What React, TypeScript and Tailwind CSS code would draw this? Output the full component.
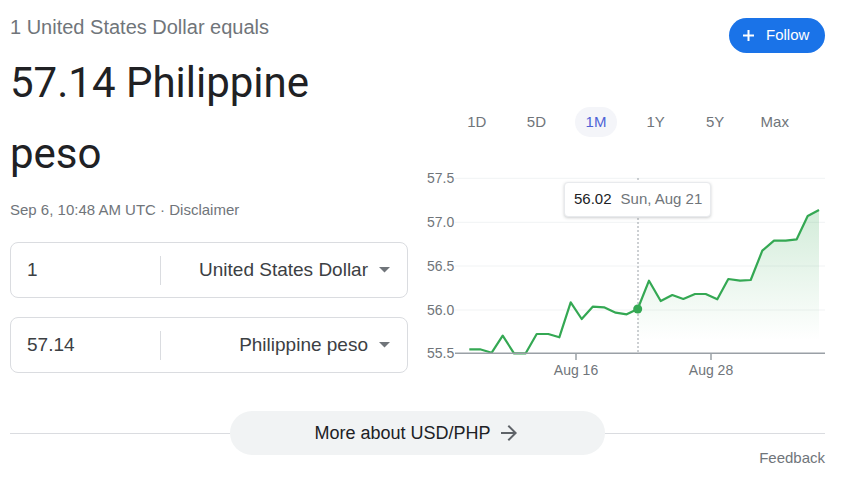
const tabs = ["1D", "5D", "1M", "1Y", "5Y", "Max"];

const pts: [number, number][] = [
  [49.3, 184.3], [60, 184.3], [71.7, 187.7], [82.7, 170.7], [94, 188.3], [105.7, 188.3],
  [116.7, 169], [128.3, 169], [139.3, 172.3], [150.7, 137.3], [161.7, 154], [172.7, 141.7],
  [184, 142.3], [195.7, 147.7], [206.7, 149.3], [217.7, 144], [229, 115.7], [240.7, 136],
  [252.3, 130], [263.3, 134], [275, 129], [285.7, 129], [297.3, 134.3], [308.3, 114],
  [320, 115.7], [330.7, 115], [342.3, 85.7], [354, 75.7], [365.7, 75.7], [376.7, 74.3],
  [387.7, 51], [399, 45],
];

const grid = [
  { y: 13.3, label: "57.5" },
  { y: 57.3, label: "57.0" },
  { y: 101, label: "56.5" },
  { y: 145, label: "56.0" },
];

function Caret() {
  return (
    <svg width="11" height="6" viewBox="0 0 11 6">
      <path d="M0 0h11L5.5 5.5z" fill="#70757a" />
    </svg>
  );
}

function CurrencyBox({ amount, currency }: { amount: string; currency: string }) {
  return (
    <div className="flex h-[56px] items-center rounded-lg border border-[#dadce0]">
      <div className="w-[149px] pl-[16px] text-[19px] text-[#3c4043]">{amount}</div>
      <div className="h-[29px] w-px bg-[#dadce0]" />
      <div className="flex flex-1 items-center justify-end gap-[11px] pr-[17px] text-[19px] text-[#3c4043]">
        <span>{currency}</span>
        <Caret />
      </div>
    </div>
  );
}

function Chart() {
  const line = pts.map((p, i) => `${i ? "L" : "M"}${p[0]} ${p[1]}`).join(" ");
  const tail = pts.slice(15);
  const area =
    tail.map((p, i) => `${i ? "L" : "M"}${p[0]} ${p[1]}`).join(" ") +
    ` L399 188.3 L217.7 188.3 Z`;

  return (
    <div className="relative mt-[28px] h-[215px] w-[405px]">
      <svg width="405" height="215" viewBox="0 0 405 215" className="overflow-visible">
        <defs>
          <linearGradient id="fill" x1="0" y1="45" x2="0" y2="175" gradientUnits="userSpaceOnUse">
            <stop offset="0" stopColor="#34a853" stopOpacity="0.22" />
            <stop offset="1" stopColor="#34a853" stopOpacity="0" />
          </linearGradient>
        </defs>
        {grid.map((g) => (
          <g key={g.label}>
            <line x1="35" x2="405" y1={g.y} y2={g.y} stroke="#f1f3f4" strokeWidth="1" />
            <text x="7" y={g.y + 5} fontSize="14" fill="#70757a" fontFamily="Liberation Sans, Arial, sans-serif">
              {g.label}
            </text>
          </g>
        ))}
        <text x="7" y={193.3} fontSize="14" fill="#70757a" fontFamily="Liberation Sans, Arial, sans-serif">
          55.5
        </text>
        <path d={area} fill="url(#fill)" />
        <line x1="218" x2="218" y1="13" y2="188" stroke="#9aa0a6" strokeWidth="1" strokeDasharray="2 2" />
        <path d={line} fill="none" stroke="#34a853" strokeWidth="2.2" strokeLinejoin="round" />
        <line x1="35" x2="405" y1="188.3" y2="188.3" stroke="#9aa0a6" strokeWidth="1.5" />
        <line x1="156" x2="156" y1="188" y2="195" stroke="#9aa0a6" strokeWidth="1.5" />
        <line x1="291" x2="291" y1="188" y2="195" stroke="#9aa0a6" strokeWidth="1.5" />
        <text x="156" y="210" textAnchor="middle" fontSize="14" fill="#70757a" fontFamily="Liberation Sans, Arial, sans-serif">
          Aug 16
        </text>
        <text x="291" y="210" textAnchor="middle" fontSize="14" fill="#70757a" fontFamily="Liberation Sans, Arial, sans-serif">
          Aug 28
        </text>
        <circle cx="217.7" cy="144" r="4.5" fill="#34a853" />
      </svg>
      <div className="absolute left-[144px] top-[17px] flex h-[35px] w-[147px] items-center gap-[9px] rounded border border-[#e8eaed] bg-white pl-[9px] text-[15px] shadow-[0_1px_3px_rgba(60,64,67,0.25)]">
        <span className="text-[#202124]">56.02</span>
        <span className="text-[#70757a]">Sun, Aug 21</span>
      </div>
    </div>
  );
}

export default function App() {
  return (
    <div className="h-[478px] w-[843px] overflow-hidden bg-white pl-[10px] pr-[18px] font-['Liberation_Sans',Arial,sans-serif]">
      <div className="flex h-[380px] items-start">
        <div className="w-[398px]">
          <p className="pt-[15px] text-[20px] leading-[24px] text-[#70757a]">1 United States Dollar equals</p>
          <p className="mt-[8px] font-['Roboto',Arial,sans-serif] text-[42px] leading-[71px] text-[#202124]">
            57.14 Philippine
            <br />
            peso
          </p>
          <p className="mt-[11px] text-[15px] leading-[20px] text-[#70757a]">
            Sep 6, 10:48 AM UTC · <span>Disclaimer</span>
          </p>
          <div className="mt-[22px] flex flex-col gap-[19px]">
            <CurrencyBox amount="1" currency="United States Dollar" />
            <CurrencyBox amount="57.14" currency="Philippine peso" />
          </div>
        </div>

        <div className="ml-[12px] flex flex-1 flex-col">
          <button className="mt-[18px] flex h-[35px] w-[96px] items-center gap-[12px] self-end rounded-full bg-[#1a73e8] pl-[14px] text-[15px] text-white">
            <svg width="11" height="11" viewBox="0 0 11 11">
              <path d="M5.5 0v11M0 5.5h11" stroke="white" strokeWidth="2" />
            </svg>
            Follow
          </button>
          <div className="mt-[54px] flex pl-[27px]">
            {tabs.map((t) => (
              <div key={t} className="flex w-[59.6px] justify-center">
                <span
                  className={
                    t === "1M"
                      ? "flex h-[30px] items-center rounded-full bg-[#f4f5f9] px-[11px] text-[15px] text-[#4e63d6]"
                      : "flex h-[30px] items-center px-[11px] text-[15px] text-[#70757a]"
                  }
                >
                  {t}
                </span>
              </div>
            ))}
          </div>
          <Chart />
        </div>
      </div>

      <div className="mt-[31px] flex items-center">
        <div className="h-px flex-1 bg-[#dadce0]" />
        <button className="flex h-[44px] w-[375px] items-center justify-center gap-[6px] rounded-full bg-[#f1f3f4] text-[18px] text-[#202124]">
          More about USD/PHP
          <svg width="24" height="24" viewBox="0 0 24 24">
            <path d="M12 4l-1.41 1.41L16.17 11H4v2h12.17l-5.58 5.59L12 20l8-8z" fill="#5f6368" />
          </svg>
        </button>
        <div className="h-px flex-1 bg-[#dadce0]" />
      </div>
      <p className="-mt-[5px] text-right text-[15px] leading-[15px] text-[#70757a]">Feedback</p>
    </div>
  );
}
